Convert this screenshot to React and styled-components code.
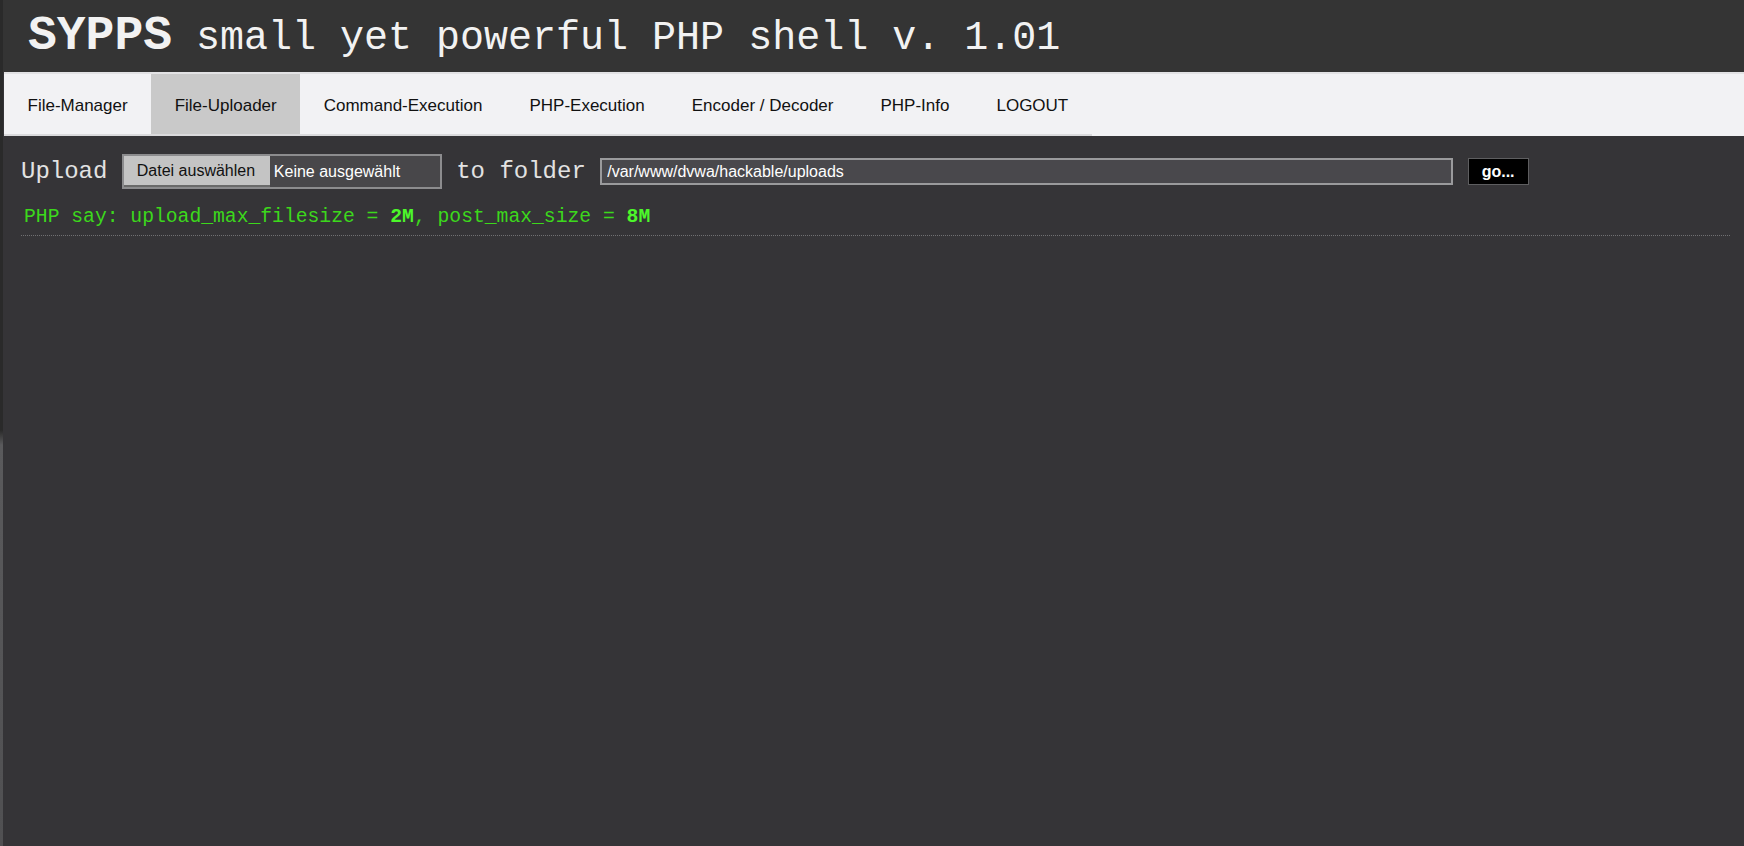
import React from 'react';
import styled, { createGlobalStyle } from 'styled-components';

const GlobalStyle = createGlobalStyle`
  html, body {
    margin: 0;
    padding: 0;
    background: #353437;
  }
  #root {
    min-height: 100vh;
  }
`;

const Page = styled.div`
  min-height: 100vh;
  box-sizing: border-box;
  background: #353437;
  border-left: 3px solid;
  border-image: linear-gradient(to bottom, #2a2a2a 0, #2a2a2a 430px, #5a5a5c 445px, #505052 100%) 1;
`;

const Header = styled.h1`
  margin: 0;
  height: 72px;
  box-sizing: border-box;
  padding: 12px 0 0 25px;
  background: #343434;
  color: #f2f2f2;
  font-family: 'Liberation Mono', 'Courier New', monospace;
  font-weight: normal;
  font-size: 40px;
  line-height: 48px;
  white-space: nowrap;
  overflow: hidden;
`;

const Brand = styled.span`
  font-size: 48px;
  font-weight: bold;
`;

const Nav = styled.nav`
  margin-left: 1px;
  height: 64px;
  box-sizing: border-box;
  background: #f2f2f4;
  border-top: 2px solid #e2e2e4;
`;

const Tabs = styled.ul`
  display: flex;
  width: fit-content;
  height: 62px;
  margin: 0;
  padding: 0;
  list-style: none;
  border-bottom: 2px solid #dadadc;
  box-sizing: border-box;
`;

const Tab = styled.li`
  display: flex;
  align-items: center;
  padding: 3px 23.5px 0;
  background: ${(p) => (p.$active ? '#c9c9c9' : 'transparent')};
  color: #111;
  font-family: 'Liberation Sans', Arial, sans-serif;
  font-size: 17px;
  white-space: nowrap;
`;

const Content = styled.main`
  padding: 18px 14px 0 18px;
`;

const UploadRow = styled.form`
  display: flex;
  align-items: center;
  gap: 14.4px;
  margin: 0;
`;

const Label = styled.span`
  color: #e2e2e2;
  font-family: 'Liberation Mono', 'Courier New', monospace;
  font-size: 24px;
  white-space: nowrap;
`;

const FileBox = styled.div`
  display: flex;
  width: 320px;
  height: 35px;
  box-sizing: border-box;
  border: 2px solid #8c8c8e;
  background: #48474a;
`;

const FileButton = styled.span`
  display: flex;
  align-items: center;
  width: 146px;
  box-sizing: border-box;
  padding-left: 13px;
  background: #c4c4c4;
  border-bottom: 2px solid #6a6a6a;
  color: #111;
  font-family: 'Liberation Sans', Arial, sans-serif;
  font-size: 16px;
  white-space: nowrap;
`;

const FileName = styled.span`
  display: flex;
  align-items: center;
  padding-left: 4px;
  color: #fff;
  font-family: 'Liberation Sans', Arial, sans-serif;
  font-size: 16px;
  white-space: nowrap;
`;

const PathInput = styled.input`
  width: 853px;
  height: 27px;
  box-sizing: border-box;
  padding: 0 5px;
  border: 2px solid #9a9a9c;
  background: #49484c;
  color: #fff;
  font-family: 'Liberation Sans', Arial, sans-serif;
  font-size: 16px;
  outline: none;
`;

const GoButton = styled.button`
  width: 61px;
  height: 27px;
  box-sizing: border-box;
  padding: 0;
  border: 1px solid #5e5e60;
  background: #000;
  color: #fff;
  font-family: 'Liberation Sans', Arial, sans-serif;
  font-size: 16px;
  font-weight: bold;
`;

const Info = styled.p`
  margin: 0;
  padding: 16px 0 6px 3px;
  color: #3cd81c;
  font-family: 'Liberation Mono', 'Courier New', monospace;
  font-size: 19.7px;
  line-height: 24px;
  white-space: pre;
  border-bottom: 1px dotted #707072;
`;

const Strong = styled.b`
  color: #4cf72a;
`;

const tabs = [
  'File-Manager',
  'File-Uploader',
  'Command-Execution',
  'PHP-Execution',
  'Encoder / Decoder',
  'PHP-Info',
  'LOGOUT',
];

export default function App() {
  return (
    <>
      <GlobalStyle />
      <Page>
        <Header>
          <Brand>SYPPS</Brand> small yet powerful PHP shell v. 1.01
        </Header>
        <Nav>
          <Tabs>
            {tabs.map((t) => (
              <Tab key={t} $active={t === 'File-Uploader'}>
                {t}
              </Tab>
            ))}
          </Tabs>
        </Nav>
        <Content>
          <UploadRow onSubmit={(e) => e.preventDefault()}>
            <Label>Upload</Label>
            <FileBox>
              <FileButton>Datei auswählen</FileButton>
              <FileName>Keine ausgewählt</FileName>
            </FileBox>
            <Label>to folder</Label>
            <PathInput defaultValue="/var/www/dvwa/hackable/uploads" />
            <GoButton type="submit">go...</GoButton>
          </UploadRow>
          <Info>
            PHP say: upload_max_filesize = <Strong>2M</Strong>, post_max_size = <Strong>8M</Strong>
          </Info>
        </Content>
      </Page>
    </>
  );
}
